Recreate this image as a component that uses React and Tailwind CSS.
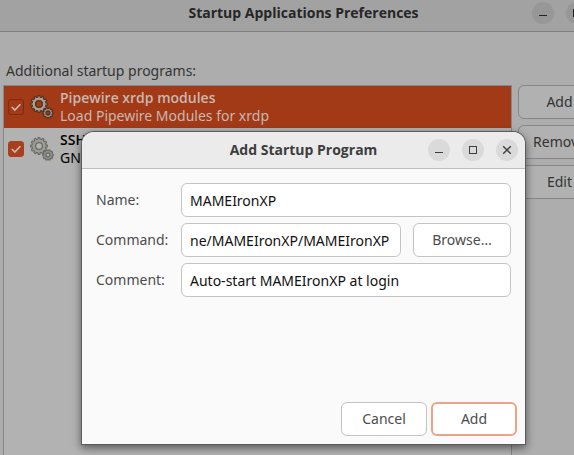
import React from 'react';

function MinimizeIcon() {
  return (
    <svg width="22" height="22" viewBox="0 0 22 22" aria-hidden="true">
      <path d="M7 13.5h8" stroke="currentColor" strokeWidth="1" />
    </svg>
  );
}

function MaximizeIcon() {
  return (
    <svg width="22" height="22" viewBox="0 0 22 22" aria-hidden="true">
      <rect x="7.5" y="7.5" width="7" height="7" fill="none" stroke="currentColor" strokeWidth="1" />
    </svg>
  );
}

function CloseIcon() {
  return (
    <svg width="22" height="22" viewBox="0 0 22 22" aria-hidden="true">
      <path d="M7.2 7.2l7.6 7.6M14.8 7.2l-7.6 7.6" stroke="currentColor" strokeWidth="1.3" />
    </svg>
  );
}

function WindowControls({ tone }) {
  const style = tone === 'dim' ? 'bg-[#979797] text-[#242424]' : 'bg-[#dadada] text-[#3d3d3d]';
  return (
    <div className="flex justify-end gap-3">
      <button type="button" aria-label="Minimize" className={`size-[22px] rounded-full ${style}`}><MinimizeIcon /></button>
      <button type="button" aria-label="Maximize" className={`size-[22px] rounded-full ${style}`}><MaximizeIcon /></button>
      <button type="button" aria-label="Close" className={`size-[22px] rounded-full ${style}`}><CloseIcon /></button>
    </div>
  );
}

function gearOutline(cx, cy, r, depth, teeth) {
  const points = [];
  const slice = (2 * Math.PI) / teeth;
  const at = (radius, angle) => `${(cx + radius * Math.cos(angle)).toFixed(2)} ${(cy + radius * Math.sin(angle)).toFixed(2)}`;
  for (let i = 0; i < teeth; i += 1) {
    const a = i * slice;
    points.push(at(r - depth, a - slice * 0.32), at(r, a - slice * 0.2), at(r, a + slice * 0.2), at(r - depth, a + slice * 0.32));
  }
  return `M${points.join('L')}Z`;
}

function Gear({ cx, cy, r, depth, holeRadius, teeth, edge, fill, hole }) {
  return (
    <g stroke={edge} strokeLinejoin="round">
      <path d={gearOutline(cx, cy, r, depth, teeth)} fill={fill} strokeWidth="1.1" />
      <circle cx={cx} cy={cy} r={holeRadius} fill={hole} strokeWidth="1.3" />
    </g>
  );
}

function GearsIcon({ selected }) {
  const edge = selected ? '#54301f' : '#696967';
  const fill = selected ? '#a9a094' : '#9b9b93';
  const hole = selected ? '#a23a17' : '#b2b2b2';
  return (
    <svg width="24" height="24" viewBox="0 0 24 24" className="shrink-0" aria-hidden="true">
      <Gear cx={9} cy={9} r={8.4} depth={1.5} holeRadius={3.4} teeth={12} edge={edge} fill={fill} hole={hole} />
      <Gear cx={18} cy={18} r={5.3} depth={1} holeRadius={2} teeth={10} edge={edge} fill={fill} hole={hole} />
    </svg>
  );
}

function ProgramRow({ id, name, detail, selected }) {
  return (
    <li className={`flex h-[42px] items-center pl-1 ${selected ? 'bg-[#a23a17] text-[#c9b7b0]' : 'text-black'}`}>
      <span className="relative mr-1.5 size-4 shrink-0">
        <input
          id={id}
          type="checkbox"
          defaultChecked
          className={`block size-4 appearance-none rounded-[3px] border ${selected ? 'border-[#7a2b11] bg-[#a23a17]' : 'border-[#a8401d] bg-[#a8401d]'}`}
        />
        <svg width="16" height="16" viewBox="0 0 16 16" className="pointer-events-none absolute inset-0" aria-hidden="true">
          <path d="M3.8 8l3 3 5.6-5.8" fill="none" stroke="#c6bab5" strokeWidth="1.6" />
        </svg>
      </span>
      <GearsIcon selected={selected} />
      <label htmlFor={id} className="ml-1.5 block leading-[18px] whitespace-nowrap">
        <span className="block font-['Open_Sans',sans-serif] font-semibold">{name}</span>
        <span className="block">{detail}</span>
      </label>
    </li>
  );
}

function SideButton({ children }) {
  return (
    <button type="button" className="h-[34px] rounded-md border border-[#878787] bg-[#b1b1b1] text-[#333333]">
      {children}
    </button>
  );
}

const field = 'h-[34px] w-full min-w-0 rounded-md border border-[#c4c4c4] bg-white px-2 text-[#111111] outline-none';
const label = 'text-[#4c4c4c]';

function AddProgramDialog() {
  return (
    <form
      role="dialog"
      aria-labelledby="dialog-title"
      className="flex min-h-[312px] w-[443px] flex-col overflow-hidden rounded-t-xl bg-[#fafafa] shadow-[0_0_0_1px_#5c5c5c,0_3px_9px_1px_rgba(0,0,0,0.5)]"
    >
      <header className="grid h-[37px] grid-cols-[1fr_auto_1fr] items-center border-b border-[#bdbdbd] bg-[#ebebeb] pr-[7px] pl-[7px]">
        <h2 id="dialog-title" className="col-start-2 font-['Open_Sans',sans-serif] font-bold text-[#3d3d3d]">Add Startup Program</h2>
        <WindowControls tone="light" />
      </header>
      <div className="grid grid-cols-[73px_1fr] items-center gap-x-3 gap-y-1.5 p-3.5">
        <label htmlFor="name" className={label}>Name:</label>
        <input id="name" className={field} defaultValue="MAMEIronXP" />
        <label htmlFor="command" className={label}>Command:</label>
        <div className="flex gap-3">
          <input id="command" className={field} defaultValue="ne/MAMEIronXP/MAMEIronXP" />
          <button type="button" className="h-[34px] w-[98px] shrink-0 rounded-md border border-[#c4c4c4] bg-white text-[#4c4c4c]">Browse…</button>
        </div>
        <label htmlFor="comment" className={label}>Comment:</label>
        <input id="comment" className={field} defaultValue="Auto-start MAMEIronXP at login" />
      </div>
      <footer className="mt-auto flex justify-end gap-1 p-2">
        <button type="button" className="h-[34px] w-[86px] rounded-md border border-[#c4c4c4] bg-white text-[#4c4c4c]">Cancel</button>
        <button type="submit" className="h-[34px] w-[86px] rounded-md border-2 border-[#eda388] bg-white text-[#4c4c4c]">Add</button>
      </footer>
    </form>
  );
}

export default function App() {
  return (
    <div className="flex min-h-screen overflow-hidden bg-[#adadad] font-['Noto_Sans','Open_Sans',sans-serif] text-[14px] leading-5">
      <div className="relative -mr-[55px] -ml-[22px] flex min-w-0 flex-1 flex-col">
        <header className="grid h-8 grid-cols-[1fr_auto_1fr] items-start border-b border-[#7f7f7f] bg-[#a2a2a2] px-[7px] pt-0.5">
          <h1 className="col-start-2 pt-px font-['Open_Sans',sans-serif] font-bold text-[#262626]">Startup Applications Preferences</h1>
          <WindowControls tone="dim" />
        </header>
        <main className="flex flex-1 flex-col pt-7 pr-7 pl-[25px]">
          <h2 className="mb-1 pl-[3px] leading-[21px] text-[#343434]">Additional startup programs:</h2>
          <div className="flex flex-1 gap-1.5">
            <ul className="flex-1 border border-b-0 border-[#878787] bg-[#b2b2b2]">
              <ProgramRow id="pipewire" name="Pipewire xrdp modules" detail="Load Pipewire Modules for xrdp" selected />
              <ProgramRow id="ssh" name="SSH Key Agent" detail="GNOME Keyring: SSH Agent" />
            </ul>
            <div className="flex w-[83px] flex-col gap-1.5">
              <SideButton>Add</SideButton>
              <SideButton>Remove</SideButton>
              <SideButton>Edit</SideButton>
            </div>
          </div>
        </main>
        <div className="absolute inset-0 flex items-start justify-center pt-[132px]">
          <AddProgramDialog />
        </div>
      </div>
    </div>
  );
}
